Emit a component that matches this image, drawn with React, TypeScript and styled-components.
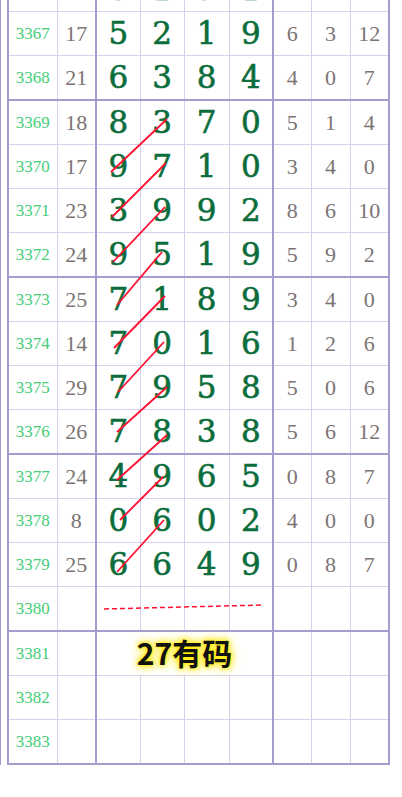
import React from "react";
import styled, { createGlobalStyle } from "styled-components";

const GlobalStyle = createGlobalStyle`
  html, body {
    margin: 0;
    padding: 0;
    background: #ffffff;
  }
`;

const THIN = "#d6d0ec";
const THICK = "#a59dcf";

const Frame = styled.div`
  position: relative;
  display: flow-root;
  width: 389px;
  border-left: 1px solid ${THICK};
  padding-left: 6px;
  box-sizing: border-box;
`;

const Sheet = styled.table`
  border-collapse: collapse;
  table-layout: fixed;
  width: 382px;
  margin-top: -34px;
  border: 2px solid ${THICK};
`;

const Row = styled.tr<{ $groupEnd?: boolean }>`
  height: 44px;
  & > td {
    border-bottom: ${(p) => (p.$groupEnd ? `2px solid ${THICK}` : `1px solid ${THIN}`)};
  }
`;

const Cell = styled.td<{ $thickLeft?: boolean }>`
  padding: 0;
  height: 43px;
  line-height: 1;
  text-align: center;
  vertical-align: middle;
  border-left: ${(p) => (p.$thickLeft ? `2px solid ${THICK}` : `1px solid ${THIN}`)};
  border-top: 1px solid ${THIN};
  white-space: nowrap;
  overflow: visible;
`;

const IssueCell = styled(Cell)`
  font-family: "Liberation Serif", serif;
  font-size: 17px;
  color: #45cd78;
`;

const SumCell = styled(Cell)`
  font-family: "Liberation Serif", serif;
  font-size: 22px;
  color: #7c7474;
`;

const DigitCell = styled(Cell)`
  font-family: "DejaVu Serif", serif;
  font-size: 31px;
  color: #0b6d3b;
  -webkit-text-stroke: 0.6px #0b6d3b;
`;

const Label = styled.span`
  font-family: "Noto Sans CJK SC", "Noto Sans", sans-serif;
  font-weight: 700;
  font-size: 30px;
  color: #111111;
  -webkit-text-stroke: 0;
  text-shadow: 0 0 2px #fff200, 0 0 5px #ffe500, 0 0 9px #ffe600, 0 0 14px #fff170;
`;

const Overlay = styled.svg`
  position: absolute;
  left: 0;
  top: 0;
  pointer-events: none;
`;

type Draw = {
  issue: string;
  sum?: string;
  digits?: string[];
  tail?: string[];
};

const rows: Draw[] = [
  { issue: "3366", sum: "19", digits: ["0", "1", "7", "1"], tail: ["4", "2", "6"] },
  { issue: "3367", sum: "17", digits: ["5", "2", "1", "9"], tail: ["6", "3", "12"] },
  { issue: "3368", sum: "21", digits: ["6", "3", "8", "4"], tail: ["4", "0", "7"] },
  { issue: "3369", sum: "18", digits: ["8", "3", "7", "0"], tail: ["5", "1", "4"] },
  { issue: "3370", sum: "17", digits: ["9", "7", "1", "0"], tail: ["3", "4", "0"] },
  { issue: "3371", sum: "23", digits: ["3", "9", "9", "2"], tail: ["8", "6", "10"] },
  { issue: "3372", sum: "24", digits: ["9", "5", "1", "9"], tail: ["5", "9", "2"] },
  { issue: "3373", sum: "25", digits: ["7", "1", "8", "9"], tail: ["3", "4", "0"] },
  { issue: "3374", sum: "14", digits: ["7", "0", "1", "6"], tail: ["1", "2", "6"] },
  { issue: "3375", sum: "29", digits: ["7", "9", "5", "8"], tail: ["5", "0", "6"] },
  { issue: "3376", sum: "26", digits: ["7", "8", "3", "8"], tail: ["5", "6", "12"] },
  { issue: "3377", sum: "24", digits: ["4", "9", "6", "5"], tail: ["0", "8", "7"] },
  { issue: "3378", sum: "8", digits: ["0", "6", "0", "2"], tail: ["4", "0", "0"] },
  { issue: "3379", sum: "25", digits: ["6", "6", "4", "9"], tail: ["0", "8", "7"] },
  { issue: "3380" },
  { issue: "3381" },
  { issue: "3382" },
  { issue: "3383" },
];

const groupEnds = ["3368", "3372", "3376", "3380"];

// red links drawn over the first two digit columns
const links: [number, number, number, number][] = [
  [110, 172, 166, 119],
  [111, 217, 165, 163],
  [112, 262, 164, 207],
  [116, 305, 161, 252],
  [113, 348, 164, 296],
  [117, 392, 163, 342],
  [116, 432, 166, 387],
  [116, 480, 166, 435],
  [119, 520, 162, 477],
  [116, 572, 163, 520],
];

const widths = [49, 39, 44, 44, 45, 44, 38, 39, 39];

export default function App() {
  return (
    <>
      <GlobalStyle />
      <Frame>
        <Sheet>
          <colgroup>
            {widths.map((w, i) => (
              <col key={i} style={{ width: w }} />
            ))}
          </colgroup>
          <tbody>
            {rows.map((r) => (
              <Row key={r.issue} $groupEnd={groupEnds.includes(r.issue)}>
                <IssueCell>{r.issue}</IssueCell>
                <SumCell>{r.sum ?? ""}</SumCell>
                {r.issue === "3381" ? (
                  <DigitCell $thickLeft colSpan={4}>
                    <Label>27有码</Label>
                  </DigitCell>
                ) : (
                  [0, 1, 2, 3].map((i) => (
                    <DigitCell key={i} $thickLeft={i === 0}>
                      {r.digits ? r.digits[i] : ""}
                    </DigitCell>
                  ))
                )}
                {[0, 1, 2].map((i) => (
                  <SumCell key={i} $thickLeft={i === 0}>
                    {r.tail ? r.tail[i] : ""}
                  </SumCell>
                ))}
              </Row>
            ))}
          </tbody>
        </Sheet>
        <Overlay width="402" height="770" viewBox="0 0 402 770">
          {links.map(([x1, y1, x2, y2], i) => (
            <line key={i} x1={x1} y1={y1} x2={x2} y2={y2} stroke="#ff1030" strokeWidth="1.8" />
          ))}
          <line
            x1="103"
            y1="609"
            x2="262"
            y2="605"
            stroke="#ff1030"
            strokeWidth="1.5"
            strokeDasharray="5 3"
          />
        </Overlay>
      </Frame>
    </>
  );
}
